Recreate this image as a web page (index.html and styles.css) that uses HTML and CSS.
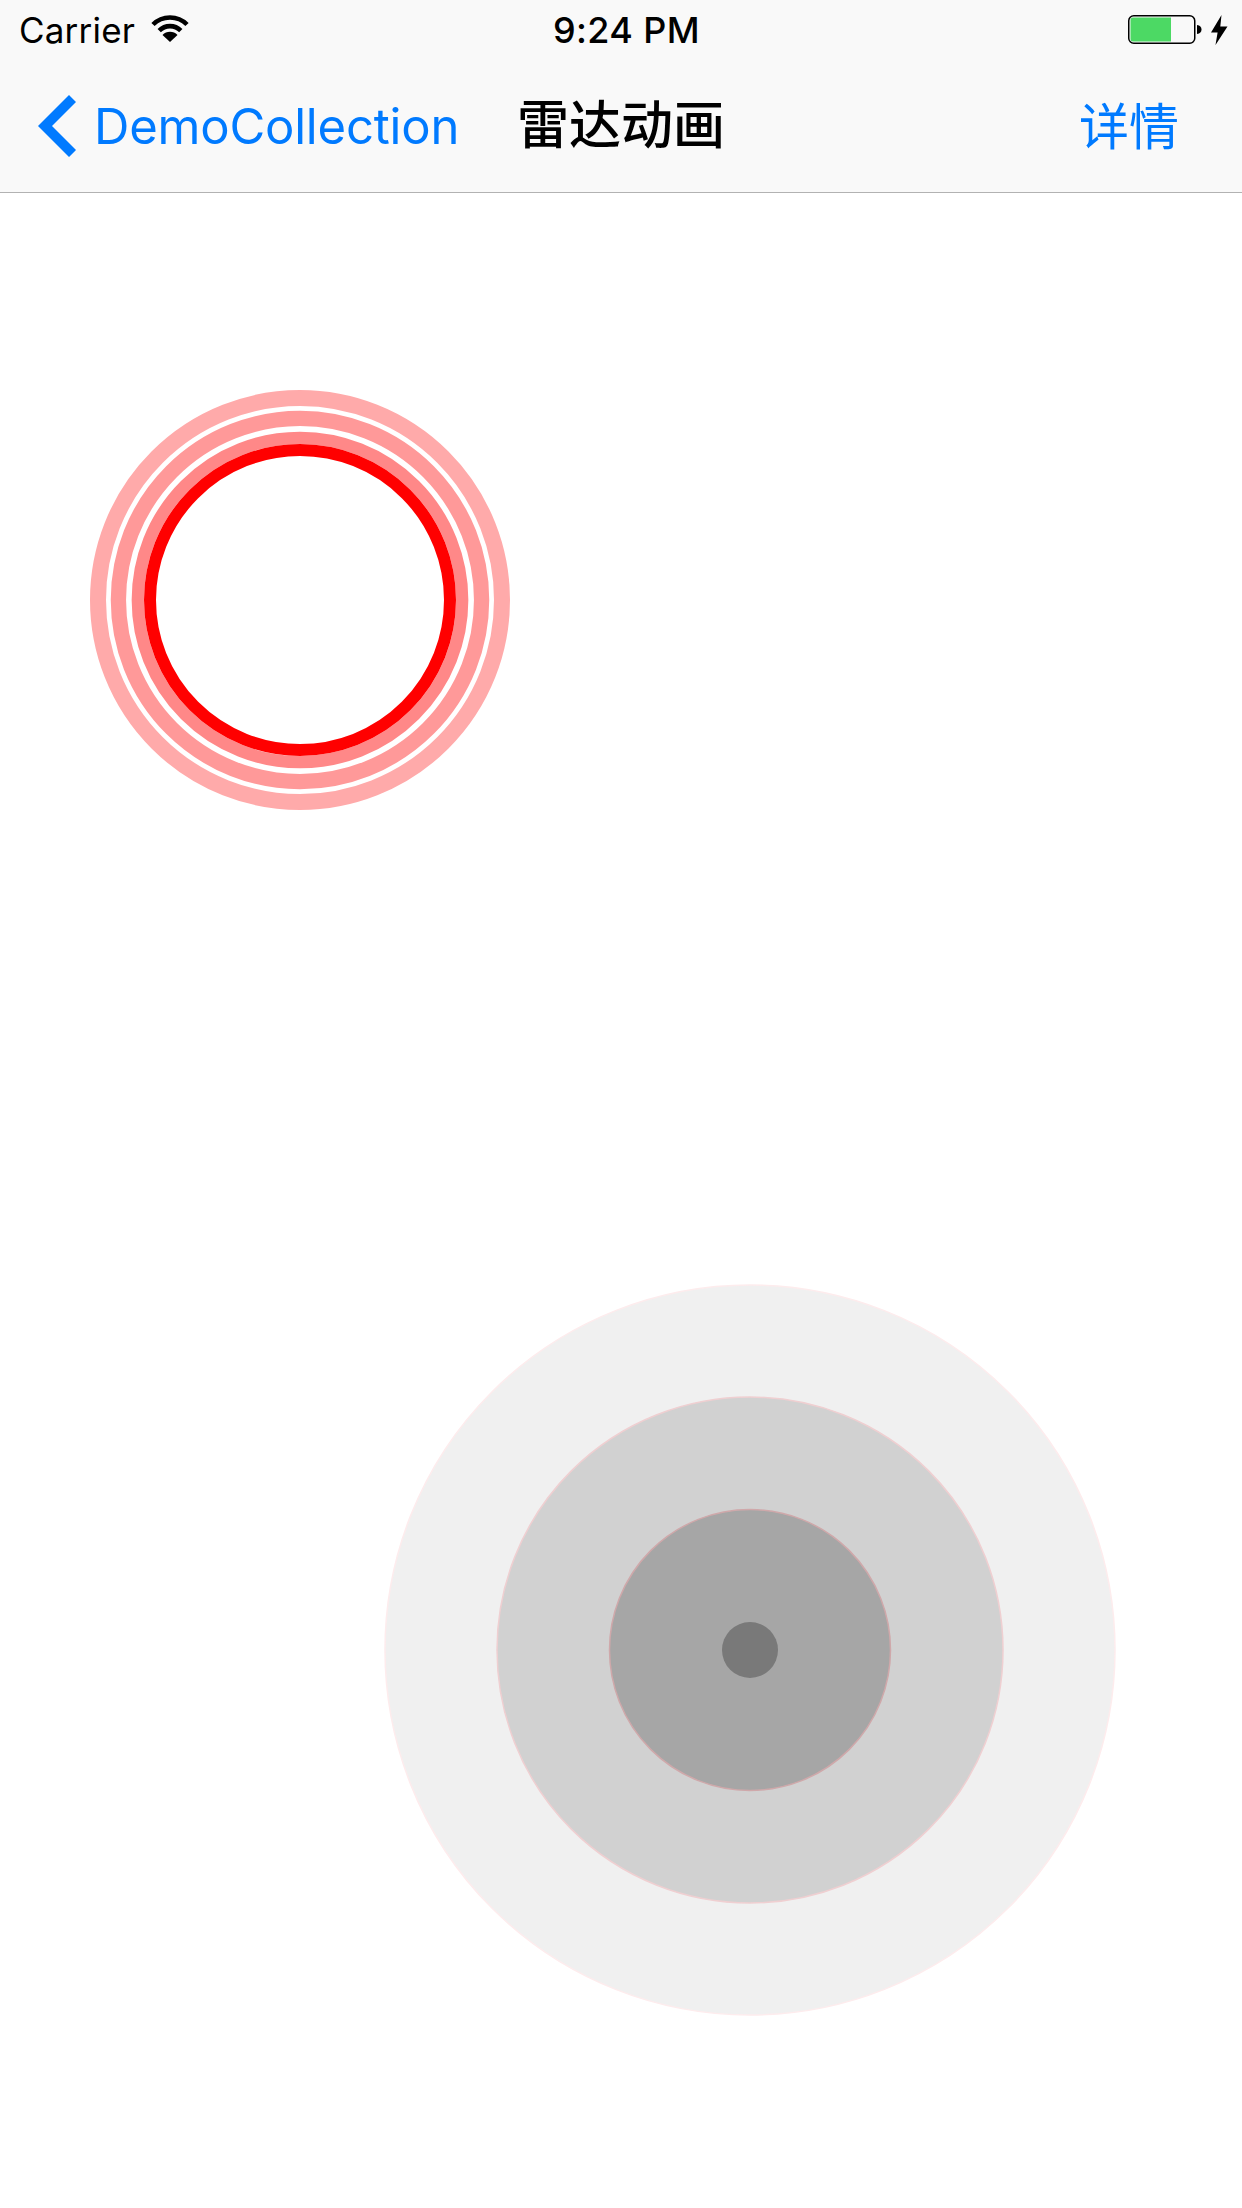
FILE: index.html
```html
<!DOCTYPE html>
<html lang="zh-CN">
<head>
  <meta charset="UTF-8" />
  <title>雷达动画</title>
  <link rel="stylesheet" href="styles.css">
</head>
<body>

  <header class="topBar">
    <div class="statusBar">
      <div class="statusLeft">
        <span class="carrier">Carrier</span>
        <svg class="wifi" width="38" height="27" viewBox="0 0 38 27">
          <path d="M2 9.5 A24 24 0 0 1 36 9.5" fill="none" stroke="#000" stroke-width="4.6" />
          <path d="M8.2 15.6 A15.2 15.2 0 0 1 29.8 15.6" fill="none" stroke="#000" stroke-width="4.6" />
          <path d="M11.5 20 A10.5 10.5 0 0 1 26.5 20 L19 27 Z" fill="#000" />
        </svg>
      </div>
      <span class="clock">9:24 PM</span>
      <div class="statusRight">
        <svg class="battery" width="74" height="30" viewBox="0 0 74 30">
          <rect x="0.75" y="0.75" width="66" height="27.5" rx="5" fill="none" stroke="#000" stroke-width="1.5" />
          <path d="M2.5 5 a2.5 2.5 0 0 1 2.5 -2.5 H43 V26.5 H5 a2.5 2.5 0 0 1 -2.5 -2.5 Z" fill="#4cd964" />
          <path d="M69 10 C72 10.5 73.5 12 73.5 14.5 C73.5 17 72 18.5 69 19 Z" fill="#000" />
        </svg>
        <svg class="bolt" width="17" height="30" viewBox="0 0 17 30">
          <path d="M10.5 0 L0 17.5 H6.6 L4.5 30 L16.5 11.5 H9.3 Z" fill="#000" />
        </svg>
      </div>
    </div>

    <nav class="navBar">
      <a class="backBtn">
        <svg class="chevron" width="38" height="62" viewBox="0 0 38 62">
          <polygon points="31,0 38,7 14,31 38,55 31,62 0,31" fill="#007aff" />
        </svg>
        <span class="backText">DemoCollection</span>
      </a>
      <h1 class="navTitle">雷达动画</h1>
      <a class="detailBtn">详情</a>
    </nav>
  </header>

  <main class="content">
    <svg class="radarRed" width="420" height="420" viewBox="0 0 420 420">
      <circle cx="210" cy="210" r="202" fill="none" stroke="#ffaaaa" stroke-width="16" />
      <circle cx="210" cy="210" r="181.6" fill="none" stroke="#ff9999" stroke-width="15.3" />
      <circle cx="210" cy="210" r="162.2" fill="none" stroke="#ff8888" stroke-width="12.3" />
      <circle cx="210" cy="210" r="150" fill="none" stroke="#ff0000" stroke-width="12" />
    </svg>

    <svg class="radarGray" width="732" height="732" viewBox="0 0 732 732">
      <circle cx="366" cy="366" r="365" fill="#f0f0f0" stroke="#fdeced" stroke-width="1.5" />
      <circle cx="366" cy="366" r="253" fill="#d1d1d1" stroke="#efcfd1" stroke-width="1.5" />
      <circle cx="366" cy="366" r="140.5" fill="#a6a6a6" stroke="#cfa8aa" stroke-width="1.5" />
      <circle cx="366" cy="366" r="28" fill="#797979" />
    </svg>
  </main>

</body>
</html>
```

FILE: styles.css
```css
html, body {
  margin: 0;
  height: 100%;
  background: #fff;
  overflow: hidden;
}

body {
  font-family: Inter, "Noto Sans CJK SC", sans-serif;
  color: #000;
}

.topBar {
  background: #f9f9f9;
  border-bottom: 1px solid #b2b2b2;
}

.statusBar {
  height: 60px;
  display: grid;
  grid-template-columns: minmax(0, 1fr) auto minmax(0, 1fr);
  align-items: center;
  padding: 0 14px 0 19px;
}

.statusLeft {
  display: flex;
  align-items: center;
  gap: 16px;
}

.carrier {
  font-size: 35px;
  letter-spacing: 0.2px;
}

.wifi {
  margin-top: -3px;
}

.clock {
  padding-left: 6px;
  font-size: 36px;
  font-weight: 500;
  letter-spacing: 0.4px;
}

.statusRight {
  display: flex;
  justify-content: flex-end;
  align-items: center;
  gap: 8px;
}

.battery {
  margin-right: 1px;
}

.navBar {
  height: 132px;
  display: grid;
  grid-template-columns: minmax(0, 1fr) auto minmax(0, 1fr);
  align-items: center;
  padding: 0 38px;
}

.backBtn {
  display: flex;
  align-items: center;
  gap: 18px;
  color: #007aff;
  white-space: nowrap;
}

.backText {
  font-size: 49px;
  letter-spacing: -0.2px;
}

.navTitle {
  margin: 0;
  font-size: 52px;
  font-weight: 500;
  line-height: 1.2;
}

.detailBtn {
  justify-self: end;
  margin: 0 25px 6px 0;
  font-size: 50px;
  color: #007aff;
}

.content {
  display: block;
}

.radarRed {
  display: block;
  margin: 197px 0 0 90px;
}

.radarGray {
  display: block;
  margin: 474px 0 0 384px;
}
```
